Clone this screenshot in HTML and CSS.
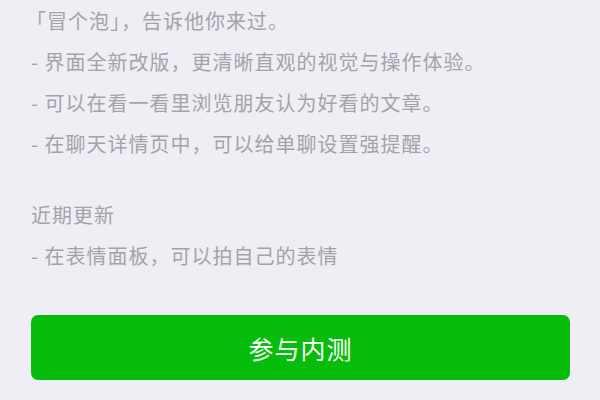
FILE: index.html
```html
<!DOCTYPE html>
<html lang="zh-CN">
<head>
<meta charset="utf-8">
<link rel="stylesheet" href="styles.css">
</head>
<body>
<div class="page">
  <div class="notes">
    <p class="line first">「冒个泡」，告诉他你来过。</p>
    <p class="line">- 界面全新改版，更清晰直观的视觉与操作体验。</p>
    <p class="line">- 可以在看一看里浏览朋友认为好看的文章。</p>
    <p class="line">- 在聊天详情页中，可以给单聊设置强提醒。</p>
  </div>
  <div class="notes recent">
    <p class="line">近期更新</p>
    <p class="line">- 在表情面板，可以拍自己的表情</p>
  </div>
  <button class="join">参与内测</button>
</div>
</body>
</html>
```

FILE: styles.css
```css
html, body {
  margin: 0;
  padding: 0;
  background: #efeef5;
}
.page {
  width: 600px;
  height: 400px;
  box-sizing: border-box;
  padding: 0 30px 0 31px;
  font-family: "Noto Sans CJK SC", "Noto Sans", sans-serif;
  display: flex;
  flex-direction: column;
}
.notes {
  display: flex;
  flex-direction: column;
}
.line {
  margin: 0;
  font-size: 20px;
  line-height: 41px;
  letter-spacing: 1px;
  color: #a4a4a8;
  white-space: nowrap;
}
.first {
  margin-left: -5px;
}
.recent {
  margin-top: 30px;
}
.join {
  margin-top: 39px;
  height: 65px;
  width: 539px;
  border: none;
  border-radius: 7px;
  background: #06bd0b;
  color: #ffffff;
  font-family: "Noto Sans CJK SC", sans-serif;
  font-size: 25px;
  letter-spacing: 1px;
  padding: 0;
}
```
